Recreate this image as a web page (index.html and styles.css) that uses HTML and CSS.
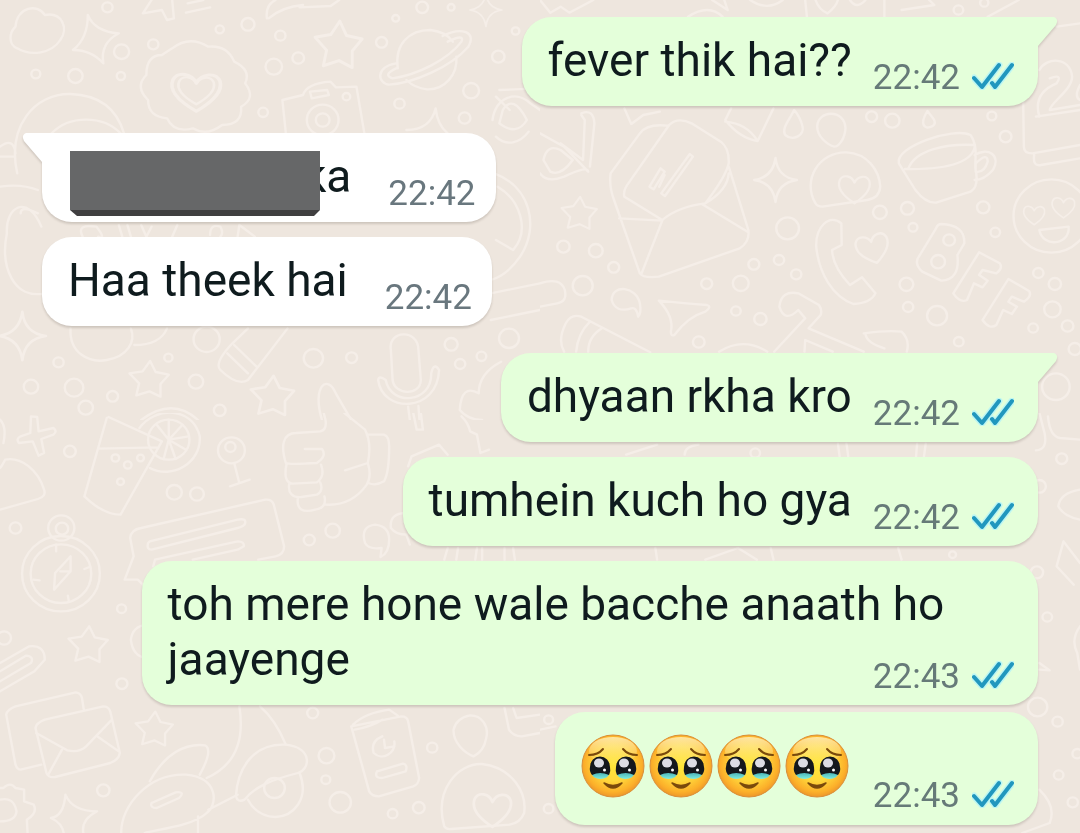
FILE: index.html
```html
<!DOCTYPE html>
<html lang="hi-Latn">
<head>
  <meta charset="UTF-8">
  <meta name="viewport" content="width=device-width, initial-scale=1">
  <title>Chat</title>
  <link rel="stylesheet" href="styles.css">
</head>
<body>

  <!-- Shared shapes -->
  <svg class="defs" aria-hidden="true">
    <defs>
      <symbol id="ticks" viewBox="0 0 42 28">
        <g fill="none" stroke-linecap="round" stroke-linejoin="round">
          <path d="M2 16 L10 25 L27 3 M20 21 L23 25 L40 3" stroke="#bdf6f2" stroke-width="7"/>
          <path d="M2 16 L10 25 L27 3 M20 21 L23 25 L40 3" stroke="#2197be" stroke-width="4"/>
        </g>
      </symbol>
      <symbol id="tail" viewBox="0 0 22 32">
        <path d="M0 0 H18 Q23 2 20 8 L2 29 V32 H0 Z"/>
      </symbol>
      <radialGradient id="face" cx="50%" cy="46%" r="56%">
        <stop offset="0" stop-color="#ffe838"/>
        <stop offset=".5" stop-color="#ffd93c"/>
        <stop offset=".82" stop-color="#fcb02a"/>
        <stop offset="1" stop-color="#e9902a"/>
      </radialGradient>
      <linearGradient id="shine" x1="0" y1="0" x2="0" y2="1">
        <stop offset="0" stop-color="#fff0c0" stop-opacity=".8"/>
        <stop offset="1" stop-color="#ffe880" stop-opacity=".1"/>
      </linearGradient>
      <linearGradient id="tear" x1="0" y1="0" x2="0" y2="1">
        <stop offset="0" stop-color="#1f7f92"/>
        <stop offset="1" stop-color="#7eeee0"/>
      </linearGradient>
      <symbol id="holding-tears" viewBox="0 0 64 64">
        <circle cx="32" cy="32" r="31" fill="url(#face)" stroke="#d98f3a" stroke-width="1"/>
        <ellipse cx="32" cy="17" rx="24" ry="14" fill="url(#shine)"/>
        <path d="M8 21 Q17 21 22 15 M56 21 Q47 21 42 15" fill="none" stroke="#7a4a0c" stroke-width="2" stroke-linecap="round"/>
        <ellipse cx="19.500" cy="39" rx="9" ry="6" fill="url(#tear)"/>
        <ellipse cx="44.500" cy="39" rx="9" ry="6" fill="url(#tear)"/>
        <path d="M9 33 A10 10.500 0 0 1 29 33 Q30 37 28 41 Q19 37 11 41 Q8 37 9 33 Z M35 33 A10 10.500 0 0 1 55 33 Q56 37 53 41 Q45 37 36 41 Q34 37 35 33 Z" fill="#14181d"/>
        <ellipse cx="18" cy="29" rx="5" ry="4.500" fill="#dcdce4"/>
        <ellipse cx="43" cy="29" rx="5" ry="4.500" fill="#dcdce4"/>
        <circle cx="23.500" cy="36" r="1.500" fill="#fff"/>
        <circle cx="48.500" cy="36" r="1.500" fill="#fff"/>
        <path d="M23 49 Q32 59 41 49 Q32 54 23 49 Z" fill="#7a4a0c" stroke="#7a4a0c" stroke-width="1.500" stroke-linejoin="round"/>
      </symbol>
      <path id="star" d="M4 -55 L20 -22 L58 -14 L34 14 L34 52 L2 36 L-36 48 L-28 12 L-56 -18 L-18 -24 Z"/>
      <path id="spark" d="M0 -66 Q6 -8 62 0 Q6 8 0 66 Q-8 8 -62 0 Q-8 -8 0 -66 Z"/>
      <path id="heart" d="M0 45 C-30 25 -55 0 -45 -28 C-35 -48 -8 -42 0 -20 C10 -42 38 -46 46 -24 C52 2 25 28 0 45 Z"/>
    </defs>
  </svg>

  <!-- Wallpaper doodles, one tile per quarter -->
  <svg class="wallpaper" viewBox="0 0 1080 833" aria-hidden="true">
    <svg x="0" y="0" width="540" height="420" viewBox="0 0 1568 1260" preserveAspectRatio="none">
      <path d="M45 80 C50 20 110 10 130 45 C180 35 200 85 175 120 C150 160 90 170 50 145 C25 135 25 100 45 80 Z"/>
      <path d="M255 45 Q275 95 345 100 Q290 130 300 190 Q265 150 212 150 Q255 115 255 45 Z"/>
      <path d="M415 40 L440 0 M415 40 L470 30 L485 60 L505 55 L500 0 M540 38 L610 22 M545 10 L590 0 M775 55 Q770 15 800 0 M780 55 Q820 20 880 15 M870 22 L960 18 L985 0"/>
      <path d="M500 145 Q550 105 605 140 Q660 135 680 185 Q730 210 712 250 Q745 295 700 320 Q705 375 645 375 Q600 410 560 385 Q505 400 485 355 Q430 350 430 300 Q390 260 425 225 Q425 165 470 165 Z"/>
      <use href="#heart" transform="translate(570 275) scale(1.5 1.3)"/>
      <use href="#heart" transform="translate(570 270) scale(1.1 .95)"/>
      <use href="#star" transform="translate(982 135) scale(1.2 1.3)"/>
      <path d="M1155 205 C1145 130 1190 90 1250 90 C1290 95 1305 110 1315 125 M1325 170 C1330 225 1290 270 1240 268 C1210 265 1190 250 1180 240"/>
      <path d="M1285 108 C1340 80 1385 95 1360 140 C1310 200 1200 250 1130 254 C1095 250 1090 200 1150 190 M1300 125 Q1350 100 1340 125 C1300 180 1210 225 1140 235 Q1110 225 1150 205"/>
      <path d="M830 400 L820 300 L880 285 Q890 250 960 245 L975 262 L1035 260 L1058 400 M905 295 L900 275 L950 270 L955 285 Z"/>
      <circle cx="937" cy="360" r="46"/><circle cx="937" cy="360" r="20"/><circle cx="1006" cy="290" r="11"/>
      <path d="M50 520 C20 380 100 280 205 282 C290 285 340 330 360 400 M150 400 C200 345 300 345 350 400 M0 440 Q40 410 45 460 M0 470 L40 470"/>
      <path d="M1450 270 L1568 265 M1440 290 L1480 330 M1430 360 C1440 290 1500 270 1540 310 L1568 330 M1440 410 C1470 440 1510 430 1535 395 M1460 330 Q1490 280 1530 360 Q1500 410 1450 370 Z"/>
      <path d="M1180 390 Q1250 390 1265 325 Q1270 375 1300 400"/>
      <path d="M0 560 Q60 550 110 570 M20 700 C15 620 80 580 120 680 M20 700 C0 800 40 900 130 880 M60 640 Q60 615 110 640 M240 710 Q220 670 280 680 Q310 720 285 710 M345 675 L355 710 M370 675 L380 710 M410 675 L425 710 L440 680 M500 710 L515 675 M610 705 Q610 670 640 680 Q650 700 640 710 M690 710 L695 675 L740 710"/>
      <path d="M1435 520 C1540 560 1568 680 1510 770 C1490 800 1460 830 1425 840 M1445 560 C1510 600 1540 690 1490 750 L1440 720 M1425 880 L1568 850 M1425 960 L1568 930"/>
      <use href="#spark" transform="translate(65 1008) scale(1.1)"/>
      <path d="M205 985 C200 1060 260 1090 310 1080 C370 1070 395 1025 380 985 M390 1035 Q465 1035 485 985"/>
      <path d="M675 1030 L720 985 M835 985 L720 1140 Q690 1160 640 1110 Q620 1090 675 1030 M680 1035 L745 1100 M660 1060 L720 1120"/>
      <path d="M1135 1050 C1125 990 1215 985 1215 1050 L1222 1140 C1220 1190 1145 1185 1140 1140 Z M1098 1140 C1110 1240 1270 1240 1275 1110 Q1260 1085 1252 1120 C1255 1210 1135 1220 1120 1140 Q1100 1125 1098 1140 M1185 1220 L1190 1260 M1215 1218 L1218 1260"/>
      <use href="#star" transform="translate(432 1138)"/><use href="#star" transform="translate(790 1188) scale(1.1)"/>
      <path d="M935 1260 C905 1160 950 1120 975 1180 L1020 1260 M1455 1085 Q1390 1120 1390 1180 Q1340 1150 1335 1230 Q1360 1260 1400 1260 M410 1260 Q500 1190 575 1260"/>
      <circle cx="312" cy="22" r="15"/><circle cx="353" cy="155" r="22"/><circle cx="445" cy="133" r="15"/><circle cx="219" cy="228" r="21"/><circle cx="351" cy="228" r="12"/><circle cx="104" cy="222" r="13"/><circle cx="638" cy="88" r="12"/><circle cx="720" cy="73" r="19"/><circle cx="814" cy="107" r="15"/><circle cx="866" cy="174" r="17"/><circle cx="795" cy="200" r="24"/><circle cx="764" cy="337" r="14"/><circle cx="1108" cy="127" r="16"/><circle cx="1226" cy="22" r="17"/><circle cx="1310" cy="22" r="10"/><circle cx="1447" cy="170" r="18"/><circle cx="1497" cy="93" r="11"/><circle cx="1368" cy="272" r="23"/><circle cx="1160" cy="311" r="15"/><circle cx="1349" cy="354" r="17"/><circle cx="1149" cy="55" r="10"/>
      <use href="#spark" transform="translate(1411 30) scale(.75)"/>
      <circle cx="600" cy="1018" r="38"/><circle cx="910" cy="1075" r="28"/><circle cx="1021" cy="1073" r="16"/><circle cx="170" cy="1087" r="15"/><circle cx="90" cy="1160" r="21"/><circle cx="215" cy="1163" r="27"/><circle cx="327" cy="1189" r="16"/><circle cx="249" cy="1223" r="21"/><circle cx="489" cy="1073" r="12"/><circle cx="569" cy="1145" r="21"/><circle cx="638" cy="1231" r="17"/><circle cx="1310" cy="1033" r="19"/><circle cx="1336" cy="1092" r="15"/><circle cx="1398" cy="1069" r="14"/><circle cx="1478" cy="1015" r="29"/>
    </svg>
    <svg x="540" y="0" width="540" height="420" viewBox="0 0 1568 1260" preserveAspectRatio="none">
      <path d="M0 0 L30 38 L60 20 L85 38 L155 0 M430 50 Q490 10 530 50 M500 0 L545 30 L535 0 M610 0 Q660 35 705 0 M770 0 L775 50 M1000 0 L1000 50 M800 0 Q810 30 835 40 Q860 20 865 0 M900 0 Q920 30 945 0 M1050 30 L1145 15 L1130 0 M1300 50 L1390 0"/>
      <circle cx="1215" cy="30" r="14"/><circle cx="1290" cy="8" r="12"/>
      <path d="M1500 80 L1568 70 M1450 210 C1470 170 1540 170 1545 230 C1545 270 1480 310 1480 330 L1568 315 M1440 350 L1568 330 M1450 350 Q1430 280 1500 250 Q1520 220 1480 235 M1403 300 L1405 440 Q1405 460 1430 460 L1568 435 M1435 465 Q1430 500 1455 495 L1568 475 M1568 255 Q1550 290 1568 300"/>
      <path d="M0 400 L70 440 L140 515 Q140 495 70 530 Q20 550 0 520 M120 340 Q155 325 158 370 L145 500 M120 345 L130 360 L125 480 L60 430 M10 480 Q20 430 60 450 L95 480 Q60 530 30 515 Z"/>
      <path d="M245 325 L265 372 L300 345 L348 335 M555 325 L538 360 Q580 415 632 423 L678 325 M538 365 Q600 370 632 423"/>
      <path d="M738 330 C725 360 700 385 712 405 C735 425 770 405 762 378 Q755 350 738 330 Z M1125 333 Q1100 375 1125 383 Q1155 378 1143 357 Z"/>
      <path d="M805 380 C805 330 885 325 887 385 C885 420 865 440 855 440 C835 435 805 410 805 380 Z"/>
      <path d="M375 375 Q400 350 440 370 L525 425 Q550 445 548 490 Q540 530 480 610 Q400 620 355 660 L245 590 Q240 570 260 545 Z M370 377 Q310 370 290 400 L205 520 Q200 560 215 600 L290 820 Q300 835 345 830 L580 745 Q610 725 605 690 L548 500 M230 655 L355 662 L295 820 M470 612 L605 697 M480 610 Q545 570 548 520"/>
      <path d="M435 462 L352 580 L363 588 L444 470 Z M350 505 L318 560 L330 568 L362 515 Z M362 525 L346 560"/>
      <use href="#spark" transform="translate(684 540)"/><use href="#star" transform="translate(113 640) scale(.9)"/>
      <path d="M800 610 C760 540 810 455 890 457 C950 460 985 510 988 560 Q985 595 950 600 L820 620 Q805 620 800 610 Z"/>
      <use href="#heart" transform="translate(913 567) scale(.95)"/>
      <path d="M1042 490 C1030 440 1200 380 1250 405 C1275 440 1260 490 1265 510 Q1275 560 1250 575 L1150 608 Q1120 610 1090 570 L1042 490 M1060 507 C1200 510 1260 480 1263 435 C1180 430 1090 450 1070 505 M1262 465 C1300 440 1340 465 1315 510 Q1290 540 1262 540 M1265 490 Q1300 455 1300 485 Q1290 520 1265 515 Z"/>
      <circle cx="1485" cy="648" r="110"/>
      <use href="#heart" transform="translate(1435 645) scale(.65)"/><use href="#heart" transform="translate(1520 622) scale(.7)"/>
      <path d="M1450 690 L1535 680 C1540 735 1460 745 1450 690 Z"/>
      <path d="M875 670 C840 640 800 680 802 740 C810 820 850 890 910 912 Q960 910 974 880 L935 832 L900 855 Q850 800 848 750 L876 735 Z"/>
      <use href="#heart" transform="translate(967 745) rotate(-15)"/>
      <path d="M1165 672 Q1235 675 1232 730 L1212 765 Q1220 840 1165 842 L1110 815 Q1085 790 1100 770 L1150 685 Q1155 672 1165 672 Z"/>
      <circle cx="1188" cy="720" r="17"/><circle cx="1156" cy="785" r="20"/>
      <path d="M1275 757 L1335 790 Q1345 805 1325 820 L1285 810 L1275 825 L1300 842 L1285 862 L1260 850 L1240 900 Q1220 910 1200 880 Z M1360 837 L1420 873 Q1430 888 1405 905 L1370 890 L1360 905 L1385 920 L1370 942 L1345 930 L1325 975 Q1305 990 1285 960 Z"/>
      <path d="M345 902 Q420 910 485 915 Q500 920 480 935 Q430 950 390 1005 Q380 1010 380 995 Q390 950 345 902 Z M285 950 Q280 920 265 925 Q220 940 208 900 C210 850 280 860 290 910 Q295 940 285 950 Z"/>
      <path d="M0 850 Q60 830 72 870 Q80 905 50 910 L0 920 M70 1055 Q50 1020 75 970 Q90 940 120 950 L320 1057 M105 1055 Q110 1000 145 965 M140 1055 Q140 1010 180 985"/>
      <path d="M680 1055 L770 955 L750 930 Q710 970 695 920 Q700 870 750 880 L810 915 Q820 930 815 945 L780 985 L940 1055 M768 1055 L770 1020 L850 1055 M520 1055 Q590 1010 660 1055 M940 1000 Q1010 990 1050 995 Q1075 1020 1065 1055 M945 1003 Q950 1030 1000 1045"/>
      <circle cx="719" cy="685" r="33"/><circle cx="583" cy="850" r="23"/><circle cx="484" cy="851" r="16"/><circle cx="621" cy="793" r="16"/><circle cx="694" cy="780" r="15"/><circle cx="744" cy="823" r="15"/><circle cx="569" cy="933" r="14"/><circle cx="640" cy="957" r="18"/><circle cx="461" cy="1026" r="17"/><circle cx="124" cy="857" r="29"/><circle cx="214" cy="802" r="16"/><circle cx="162" cy="752" r="20"/><circle cx="68" cy="740" r="18"/><circle cx="987" cy="637" r="20"/><circle cx="1067" cy="625" r="19"/><circle cx="1083" cy="682" r="13"/><circle cx="1287" cy="622" r="18"/><circle cx="1322" cy="697" r="14"/><circle cx="963" cy="350" r="16"/><circle cx="1023" cy="362" r="21"/><circle cx="1312" cy="348" r="13"/><circle cx="1352" cy="410" r="17"/><circle cx="1064" cy="853" r="20"/><circle cx="1069" cy="921" r="15"/><circle cx="1153" cy="947" r="29"/><circle cx="1447" cy="819" r="15"/><circle cx="1495" cy="852" r="18"/><circle cx="1488" cy="928" r="24"/><circle cx="1432" cy="984" r="14"/><circle cx="1532" cy="978" r="17"/><circle cx="1216" cy="1025" r="14"/><circle cx="1498" cy="1160" r="40"/><circle cx="1553" cy="1047" r="18"/>
    </svg>
    <svg x="0" y="413" width="540" height="420" viewBox="0 0 1568 1260" preserveAspectRatio="none">
      <path d="M90 10 L108 12 L112 55 L155 45 Q168 55 155 65 L120 78 L128 120 L112 128 L95 85 L55 90 Q45 78 60 70 L88 60 Z M0 20 Q20 40 10 90"/>
      <path d="M315 12 L470 85 L350 305 Q300 305 245 250 L285 105 L310 15 M287 107 L460 103"/>
      <circle cx="490" cy="80" r="60"/><path d="M405 45 C450 -20 560 -20 580 70 C585 150 500 200 435 165 M490 80 L490 20 M490 80 L530 35 M490 80 L548 70 M490 80 L540 110 M490 80 L510 138 M490 80 L475 138 M490 80 L455 35"/>
      <circle cx="335" cy="135" r="11"/><circle cx="371" cy="156" r="11"/><circle cx="408" cy="135" r="10"/><circle cx="350" cy="206" r="10"/><circle cx="203" cy="115" r="17"/>
      <circle cx="672" cy="112" r="39"/><circle cx="669" cy="102" r="15"/><path d="M680 150 L695 210 M668 220 L725 200"/>
      <path d="M0 290 L110 258 Q135 250 128 230 C110 170 60 130 15 140 Q5 160 0 165"/>
      <path d="M830 150 C815 100 820 60 860 60 L930 55 Q950 50 945 20 L940 0 M1000 0 L1060 50 Q1080 90 1068 150 M830 150 Q840 155 920 150 Q950 130 935 108 L885 108 M832 152 C825 190 830 210 850 212 L920 208 Q945 190 932 155 M840 212 C835 240 850 255 875 252 L920 245 Q940 235 930 208 M865 255 C860 290 880 300 915 290 Q950 285 942 250 M945 275 Q1020 280 1065 215 Q1080 190 1068 150 L1002 172 M1065 65 L1115 65 Q1130 70 1130 100 Q1130 180 1115 205 Q1090 220 1070 210"/>
      <path d="M1200 0 L1210 50 L1228 50 L1222 0 M1340 10 Q1360 30 1365 55 L1385 65 L1395 120 L1420 110 M1185 160 L1195 130 L1275 95 L1300 125 M1060 390 Q1045 340 1090 335 Q1130 340 1130 380 Q1130 420 1105 432 L1108 405 Q1070 410 1060 390 M1180 300 Q1130 300 1135 345 Q1150 365 1180 365 L1190 395 M1290 440 L1300 405 M1325 440 L1330 405 M1380 440 L1385 405 M1400 440 L1400 405 M1465 440 L1465 405 M1495 440 L1490 405"/>
      <path d="M378 375 Q380 350 410 345 L770 260 Q790 258 795 275 L825 400 Q825 425 800 430 L750 440 M378 375 L388 430 L362 500 L400 500 L425 525 M435 385 L690 320 Q715 315 712 330 Q710 340 690 345 L440 410 Q425 410 430 390 Z M445 460 L450 440 L690 385 Q710 385 708 400 L690 410 L560 440"/>
      <circle cx="178" cy="345" r="38"/><circle cx="180" cy="347" r="18"/><circle cx="177" cy="482" r="113"/><circle cx="177" cy="482" r="88"/><path d="M205 430 L205 475 L157 530 L160 480 Z M175 475 L205 475 M163 395 L163 415 M245 468 L260 462 M197 548 L200 565 M97 500 L115 502"/>
      <use href="#star" transform="translate(255 695)"/><use href="#star" transform="translate(447 948) scale(.95)"/>
      <path d="M425 635 Q385 640 380 680 Q385 730 425 735 M0 750 L85 700 Q130 695 130 740 L100 775 L0 835 M0 775 L75 728 Q100 730 90 750 L0 805"/>
      <path d="M120 1055 L60 1070 Q50 1070 45 1055 L18 905 Q20 890 45 880 L220 838 Q235 840 238 855 L243 888 M103 945 Q105 930 130 920 L300 880 Q315 880 320 895 L348 1020 Q345 1040 320 1050 L160 1092 Q140 1095 135 1080 Z M105 960 L195 1012 Q230 1020 250 1000 L325 920 M140 1085 L180 1010 M345 1015 L285 972"/>
      <path d="M0 1125 L10 1125 Q30 1105 45 1125 L70 1130 L70 1165 L98 1175 Q110 1200 78 1220 L80 1260 M0 1160 Q40 1150 48 1195 Q45 1225 0 1225"/>
      <path d="M190 1145 Q210 1195 282 1195 Q235 1220 242 1260 M148 1215 Q185 1210 190 1145 M148 1215 Q180 1230 185 1260"/>
      <path d="M352 1260 C350 1180 430 1080 540 1085 C640 1095 630 1180 600 1200 C560 1240 450 1250 420 1260 M435 1105 C480 1020 540 990 595 997 Q620 1010 580 1085 M440 1170 L510 1138 Q540 1135 520 1155 L455 1185 Q435 1185 440 1170 M600 1095 Q720 1040 695 880 M755 880 Q800 920 830 995 M605 1190 L690 1145 M575 1210 L575 1260"/>
      <path d="M685 1150 C690 1060 740 990 830 995 C910 1005 900 1070 865 1080 C790 1100 740 1120 710 1160 Q690 1170 685 1150 M870 1080 C900 1160 850 1210 800 1212 Q745 1210 720 1160"/><circle cx="797" cy="1125" r="30"/>
      <path d="M1020 940 L1165 910 Q1182 910 1185 925 L1217 1095 Q1215 1115 1200 1120 L1100 1150 Q1080 1150 1072 1135 Z M1025 935 Q1060 900 1130 890 L1155 908 M1030 950 Q1080 940 1110 920 M1095 1075 L1170 1052 Q1185 1055 1178 1075 L1110 1095 Q1085 1095 1095 1075 M1110 970 Q1075 985 1085 1020 C1110 1045 1150 1020 1145 985 M1115 980 L1118 1005 L1145 1000"/>
      <path d="M1365 907 C1400 907 1420 940 1412 975 Q1405 1015 1375 1030 C1350 1020 1315 990 1317 950 Q1325 915 1365 907 Z M1290 1240 C1260 1130 1330 1050 1400 1053 C1490 1065 1530 1140 1522 1200 Q1510 1230 1480 1235 L1310 1248 Q1295 1250 1290 1240"/>
      <use href="#heart" transform="translate(1430 1190) scale(1.15)"/>
      <path d="M1465 885 L1478 950 Q1490 970 1515 970 L1568 960 M1490 885 L1500 915 L1568 905"/>
      <circle cx="506" cy="238" r="22"/><circle cx="572" cy="243" r="20"/><circle cx="45" cy="345" r="17"/><circle cx="966" cy="353" r="21"/><circle cx="898" cy="381" r="16"/><circle cx="353" cy="587" r="13"/><circle cx="354" cy="812" r="16"/><circle cx="300" cy="1132" r="18"/><circle cx="12" cy="675" r="20"/><circle cx="908" cy="900" r="16"/><circle cx="948" cy="1028" r="23"/><circle cx="946" cy="1100" r="13"/><circle cx="988" cy="1168" r="31"/><circle cx="1255" cy="1004" r="15"/><circle cx="1216" cy="1184" r="17"/><circle cx="1140" cy="1202" r="14"/>
    </svg>
    <svg x="540" y="413" width="540" height="420" viewBox="0 0 1568 1260" preserveAspectRatio="none">
      <path d="M865 92 L870 130 M890 92 L895 130 M1095 92 L1092 130 M1120 92 L1115 130 M250 125 L340 95 M420 125 Q420 100 460 95 M335 405 L340 440 M480 440 L575 405 L630 440 M670 405 L678 440 M1040 405 L1050 440 M0 950 L45 940 M1440 112 Q1475 110 1465 60 L1450 0 M1475 10 Q1480 70 1510 75 L1568 80 M1568 230 Q1510 240 1505 280 Q1520 310 1568 320 M1520 385 L1568 450 M1520 385 L1500 460 L1550 515 M1568 640 Q1540 680 1560 720 L1568 770 M1450 770 L1480 772 L1450 750 M1450 1130 Q1500 1180 1480 1230 L1400 1260"/>
      <circle cx="1515" cy="137" r="16"/><circle cx="1450" cy="220" r="19"/><circle cx="1443" cy="478" r="18"/><circle cx="1473" cy="612" r="14"/><circle cx="1445" cy="882" r="28"/><circle cx="1503" cy="926" r="15"/><circle cx="1506" cy="1086" r="14"/><circle cx="1547" cy="1168" r="15"/><circle cx="1560" cy="1022" r="14"/><circle cx="25" cy="1187" r="14"/><circle cx="25" cy="920" r="13"/><circle cx="625" cy="120" r="14"/><circle cx="1198" cy="425" r="10"/>
    </svg>
  </svg>

  <main class="chat">
    <article class="message sent first">
      <svg class="tail" aria-hidden="true"><use href="#tail"/></svg>
      <span class="text">fever thik hai??</span>
      <span class="meta"><time>22:42</time><svg class="ticks" role="img" aria-label="Read"><use href="#ticks"/></svg></span>
    </article>

    <article class="message received first">
      <svg class="tail" aria-hidden="true"><use href="#tail"/></svg>
      <span class="text"><span class="redacted"></span><span class="covered">ka</span></span>
      <span class="meta"><time>22:42</time></span>
    </article>
    <article class="message received">
      <span class="text">Haa theek hai</span>
      <span class="meta"><time>22:42</time></span>
    </article>

    <article class="message sent first">
      <svg class="tail" aria-hidden="true"><use href="#tail"/></svg>
      <span class="text">dhyaan rkha kro</span>
      <span class="meta"><time>22:42</time><svg class="ticks" role="img" aria-label="Read"><use href="#ticks"/></svg></span>
    </article>
    <article class="message sent">
      <span class="text">tumhein kuch ho gya</span>
      <span class="meta"><time>22:42</time><svg class="ticks" role="img" aria-label="Read"><use href="#ticks"/></svg></span>
    </article>
    <article class="message sent">
      <span class="text">toh mere hone wale bacche anaath ho jaayenge</span>
      <span class="meta"><time>22:43</time><svg class="ticks" role="img" aria-label="Read"><use href="#ticks"/></svg></span>
    </article>
    <article class="message sent emoji-only">
      <span class="emojis" role="img" aria-label="Face holding back tears, four times">
        <svg><use href="#holding-tears"/></svg>
        <svg><use href="#holding-tears"/></svg>
        <svg><use href="#holding-tears"/></svg>
        <svg><use href="#holding-tears"/></svg>
      </span>
      <span class="meta"><time>22:43</time><svg class="ticks" role="img" aria-label="Read"><use href="#ticks"/></svg></span>
    </article>
  </main>

</body>
</html>
```
FILE: styles.css
```css
* {
  box-sizing: border-box;
}

body {
  margin: 0;
  min-height: 100vh;
  background: #eee6de;
  color: #0f1b1e;
  font-family: Roboto, "Liberation Sans", sans-serif;
  font-size: 46px;
  line-height: 55px;
  overflow-x: hidden;
}

.defs {
  position: absolute;
  width: 0;
  height: 0;
}

/* Wallpaper sits behind the whole conversation */
.wallpaper {
  position: absolute;
  top: 0;
  left: 0;
  width: 100%;
  fill: none;
  stroke: #f5eee8;
  stroke-width: 7;
  stroke-linejoin: round;
  stroke-linecap: round;
}

.chat {
  position: relative;
  display: flex;
  flex-direction: column;
  padding: 17px 42px 8px;
}

.message {
  position: relative;
  display: flow-root;
  max-width: 90%;
  margin-top: 15px;
  padding: 16px 24px 8px 26px;
  border-radius: 30px;
  filter: drop-shadow(0 2px 1px rgba(60, 50, 40, 0.18));
}

.message.first {
  margin-top: 27px;
}

.message:first-child {
  margin-top: 0;
}

.sent {
  align-self: flex-end;
  background: #e4ffda;
  fill: #e4ffda;
}

.received {
  align-self: flex-start;
  padding-right: 20px;
  background: #fff;
  fill: #fff;
}

.sent.first {
  border-top-right-radius: 0;
}

.received.first {
  border-top-left-radius: 0;
}

.tail {
  position: absolute;
  top: 0;
  width: 22px;
  height: 32px;
}

.sent .tail {
  right: -20px;
}

.received .tail {
  left: -20px;
  transform: scaleX(-1);
}

/* Time drops to the end of the last line */
.meta {
  float: right;
  display: flex;
  align-items: center;
  gap: 12px;
  margin: 24px 0 0 21px;
  color: #667a78;
  font-size: 35px;
  line-height: 41px;
}

.received .meta {
  margin-left: 37px;
  color: #69777e;
}

.ticks {
  width: 42px;
  height: 28px;
  margin-bottom: 4px;
  overflow: visible;
}

/* Marker block drawn over part of a message */
.redacted {
  position: relative;
  z-index: 1;
  display: inline-block;
  width: 250px;
  height: 65px;
  margin: 2px 0 -12px 2px;
  vertical-align: top;
  background: linear-gradient(to bottom, #666768 59px, #403f40 59px);
  clip-path: polygon(0 0, 100% 0, 100% 59px, 244px 100%, 7px 100%, 0 59px);
}

.covered {
  margin-left: -17px;
}

.emoji-only {
  margin-top: 7px;
  padding-top: 22px;
  padding-bottom: 9px;
}

.emojis {
  float: left;
  display: flex;
  gap: 4px;
}

.emojis svg {
  width: 64px;
  height: 64px;
}

.emoji-only .meta {
  margin: 41px 0 0 24px;
}
```
